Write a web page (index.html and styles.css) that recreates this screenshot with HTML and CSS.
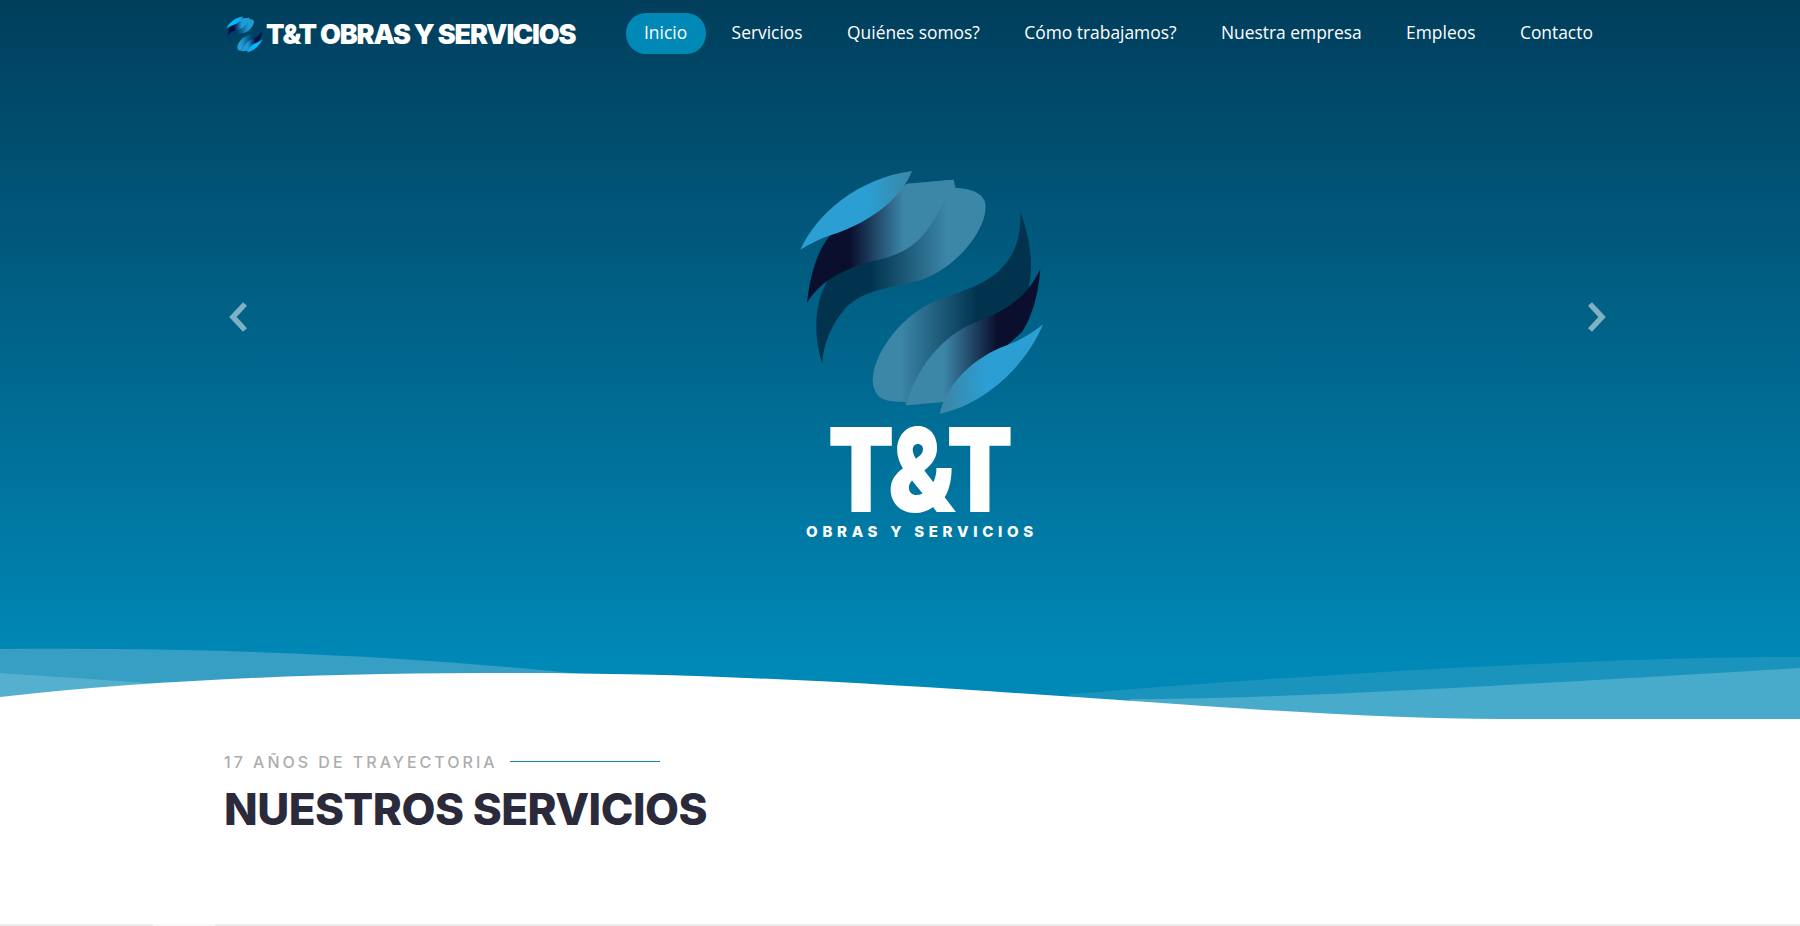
FILE: index.html
```html
<!DOCTYPE html>
<html lang="es">
<head>
<meta charset="utf-8">
<title>T&amp;T Obras y Servicios</title>
<link rel="stylesheet" href="styles.css">
</head>
<body>
<svg class="defs" width="0" height="0" aria-hidden="true">
  <defs>
    <linearGradient id="g1" gradientUnits="userSpaceOnUse" x1="270" y1="0" x2="500" y2="0"><stop offset="0" stop-color="#01334e"/><stop offset="1" stop-color="#3c86a8"/></linearGradient>
    <linearGradient id="g2" gradientUnits="userSpaceOnUse" x1="210" y1="0" x2="370" y2="0"><stop offset="0" stop-color="#0a0f2e"/><stop offset="1" stop-color="#3c86a8"/></linearGradient>
    <linearGradient id="g3" gradientUnits="userSpaceOnUse" x1="260" y1="0" x2="390" y2="0"><stop offset="0" stop-color="#2b9fd3"/><stop offset="1" stop-color="#3c86a8"/></linearGradient>
    <linearGradient id="g4" gradientUnits="userSpaceOnUse" x1="360" y1="0" x2="590" y2="0"><stop offset="0" stop-color="#3c86a8"/><stop offset="1" stop-color="#01334e"/></linearGradient>
    <linearGradient id="g5" gradientUnits="userSpaceOnUse" x1="490" y1="0" x2="650" y2="0"><stop offset="0" stop-color="#3c86a8"/><stop offset="1" stop-color="#0a0f2e"/></linearGradient>
    <linearGradient id="g6" gradientUnits="userSpaceOnUse" x1="490" y1="0" x2="620" y2="0"><stop offset="0" stop-color="#3c86a8"/><stop offset="1" stop-color="#2b9fd3"/></linearGradient>
    <symbol id="mark" viewBox="50 50 750 750">
      <path fill="url(#g1)" d="M125 640C95 540 105 440 150 380L380 100 520 88 525 112C570 115 600 125 612 150 618 165 616 185 610 205 585 280 500 372 400 395 330 412 240 420 190 480 150 530 130 580 125 640Z"/>
      <path fill="url(#g2)" d="M80 458C88 380 110 300 150 255L380 100 520 88C500 140 470 200 440 240 400 295 350 315 290 330 200 350 120 390 80 458Z"/>
      <path fill="url(#g3)" d="M60 298C110 190 230 85 395 62 370 130 290 210 150 255 120 265 90 280 60 298Z"/>
      <path fill="url(#g4)" d="M720 185C745 250 760 330 748 395L725 545 490 755 378 765 375 755C330 755 305 750 292 735 280 715 275 700 278 680 285 600 370 490 470 450 560 415 640 400 690 320 715 280 722 230 720 185Z"/>
      <path fill="url(#g5)" d="M780 355C775 430 755 500 725 545L490 755 378 765C410 640 500 545 600 510 680 480 740 440 780 355Z"/>
      <path fill="url(#g6)" d="M788 522C740 640 620 760 478 790 500 700 580 620 680 585 720 570 760 545 788 522Z"/>
    </symbol>
  </defs>
</svg>

<section class="hero">
  <header class="topbar">
    <a class="brand" href="#">
      <svg class="brand-mark"><use href="#mark"/></svg>
      <span class="brand-name">T&amp;T OBRAS Y SERVICIOS</span>
    </a>
    <nav class="menu">
      <a class="menu-item is-active" href="#">Inicio</a>
      <a class="menu-item" href="#">Servicios</a>
      <a class="menu-item" href="#">Quiénes somos?</a>
      <a class="menu-item" href="#">Cómo trabajamos?</a>
      <a class="menu-item" href="#">Nuestra empresa</a>
      <a class="menu-item" href="#">Empleos</a>
      <a class="menu-item" href="#">Contacto</a>
    </nav>
  </header>

  <div class="slide">
    <svg class="slide-mark"><use href="#mark"/></svg>
    <div class="slide-title">T&amp;T</div>
    <div class="slide-sub">OBRAS Y SERVICIOS</div>
  </div>

  <svg class="arrow arrow-prev" viewBox="0 0 20 32"><path d="M16 3 4 16l12 13" /></svg>
  <svg class="arrow arrow-next" viewBox="0 0 20 32"><path d="M4 3l12 13L4 29" /></svg>

  <svg class="wave" viewBox="0 0 1800 72" preserveAspectRatio="none">
    <path class="wave-a" d="M0 2C200 0 400 8 580 27L0 50Z"/>
    <path class="wave-b" d="M0 26C60 30 120 34 175 38L0 50Z"/>
    <path class="wave-c" d="M1070 47C1300 28 1600 10 1800 10V72H1070Z"/>
    <path class="wave-d" d="M1130 52C1250 52 1400 45 1800 21V72H1130Z"/>
    <path class="wave-white" d="M0 50C180 30 350 26 516 26 900 26 1250 72 1500 72H0Z"/>
  </svg>
</section>

<main class="services">
  <div class="eyebrow">
    <span class="eyebrow-text">17 AÑOS DE TRAYECTORIA</span>
    <span class="eyebrow-line"></span>
  </div>
  <h1 class="services-title">NUESTROS SERVICIOS</h1>
</main>
<div class="next-edge"></div>
</body>
</html>
```
FILE: styles.css
```css
* { box-sizing: border-box; }

html, body {
  margin: 0;
  height: 926px;
  overflow: hidden;
  background: #fff;
}

.defs { position: absolute; }

.hero {
  position: relative;
  height: 719px;
  padding: 0 224px;
  background: linear-gradient(180deg, #013e5c 0%, #0088b6 92%);
  color: #fff;
  font-family: "Open Sans", sans-serif;
}

.topbar {
  display: flex;
  align-items: center;
  height: 67px;
}

.brand {
  display: flex;
  align-items: center;
  gap: 3px;
  width: 399.5px;
  margin-left: 2px;
  padding-top: 2px;
  flex: none;
  color: #fff;
  text-decoration: none;
}

.brand-mark {
  width: 37px;
  height: 37px;
  filter: saturate(1.5) brightness(1.1);
}

.brand-name {
  font-family: Inter, sans-serif;
  font-weight: 900;
  font-size: 27px;
  letter-spacing: -1.2px;
  white-space: nowrap;
}

.menu {
  display: flex;
  gap: 7.5px;
}

.menu-item {
  display: flex;
  align-items: center;
  height: 41px;
  padding: 0 18.5px 4px;
  border-radius: 20px;
  color: #fff;
  font-size: 17.4px;
  text-decoration: none;
  white-space: nowrap;
}

.menu-item.is-active { background: #0088b6; }

.slide {
  display: flex;
  flex-direction: column;
  align-items: center;
  padding: 100px 0 0 44px;
}

.slide-mark {
  width: 250px;
  height: 250px;
}

.slide-title {
  margin-left: -7px;
  font-family: Inter, sans-serif;
  font-weight: 900;
  font-size: 117px;
  line-height: 105px;
  letter-spacing: -4px;
  transform: scaleX(.83);
}

.slide-sub {
  font-family: Inter, sans-serif;
  font-weight: 800;
  font-size: 15px;
  line-height: 20px;
  letter-spacing: 4.7px;
}

.arrow {
  position: absolute;
  top: 301px;
  width: 20px;
  height: 32px;
  fill: none;
  stroke: #fff;
  stroke-width: 5.5;
  opacity: .5;
}

.arrow-prev { left: 229px; }
.arrow-next { left: 1586px; }

.wave {
  position: absolute;
  left: 0;
  bottom: 0;
  width: 100%;
  height: 72px;
  display: block;
}

.wave-a { fill: #379fc3; }
.wave-b { fill: #55b0cf; }
.wave-c { fill: #1a94bd; }
.wave-d { fill: #49abcb; }
.wave-white { fill: #fff; }

.services {
  height: 205px;
  padding: 33px 224px 0;
}

.eyebrow {
  display: flex;
  align-items: center;
  gap: 12px;
}

.eyebrow-text {
  color: #adadad;
  font-family: Inter, sans-serif;
  font-size: 16px;
  font-weight: 500;
  line-height: 20px;
  letter-spacing: 3px;
  white-space: nowrap;
}

.eyebrow-line {
  width: 150px;
  height: 1px;
  margin-bottom: 2px;
  background: #1a82ab;
}

.services-title {
  margin: 10px 0 0;
  color: #2a2a3b;
  font-family: Inter, sans-serif;
  font-size: 44px;
  font-weight: 800;
  line-height: 54px;
  letter-spacing: -.5px;
  white-space: nowrap;
}

.next-edge {
  height: 2px;
  background: linear-gradient(90deg, #ececec 153px, #f8f8f8 153px, #f8f8f8 215px, #ececec 215px);
}
```
